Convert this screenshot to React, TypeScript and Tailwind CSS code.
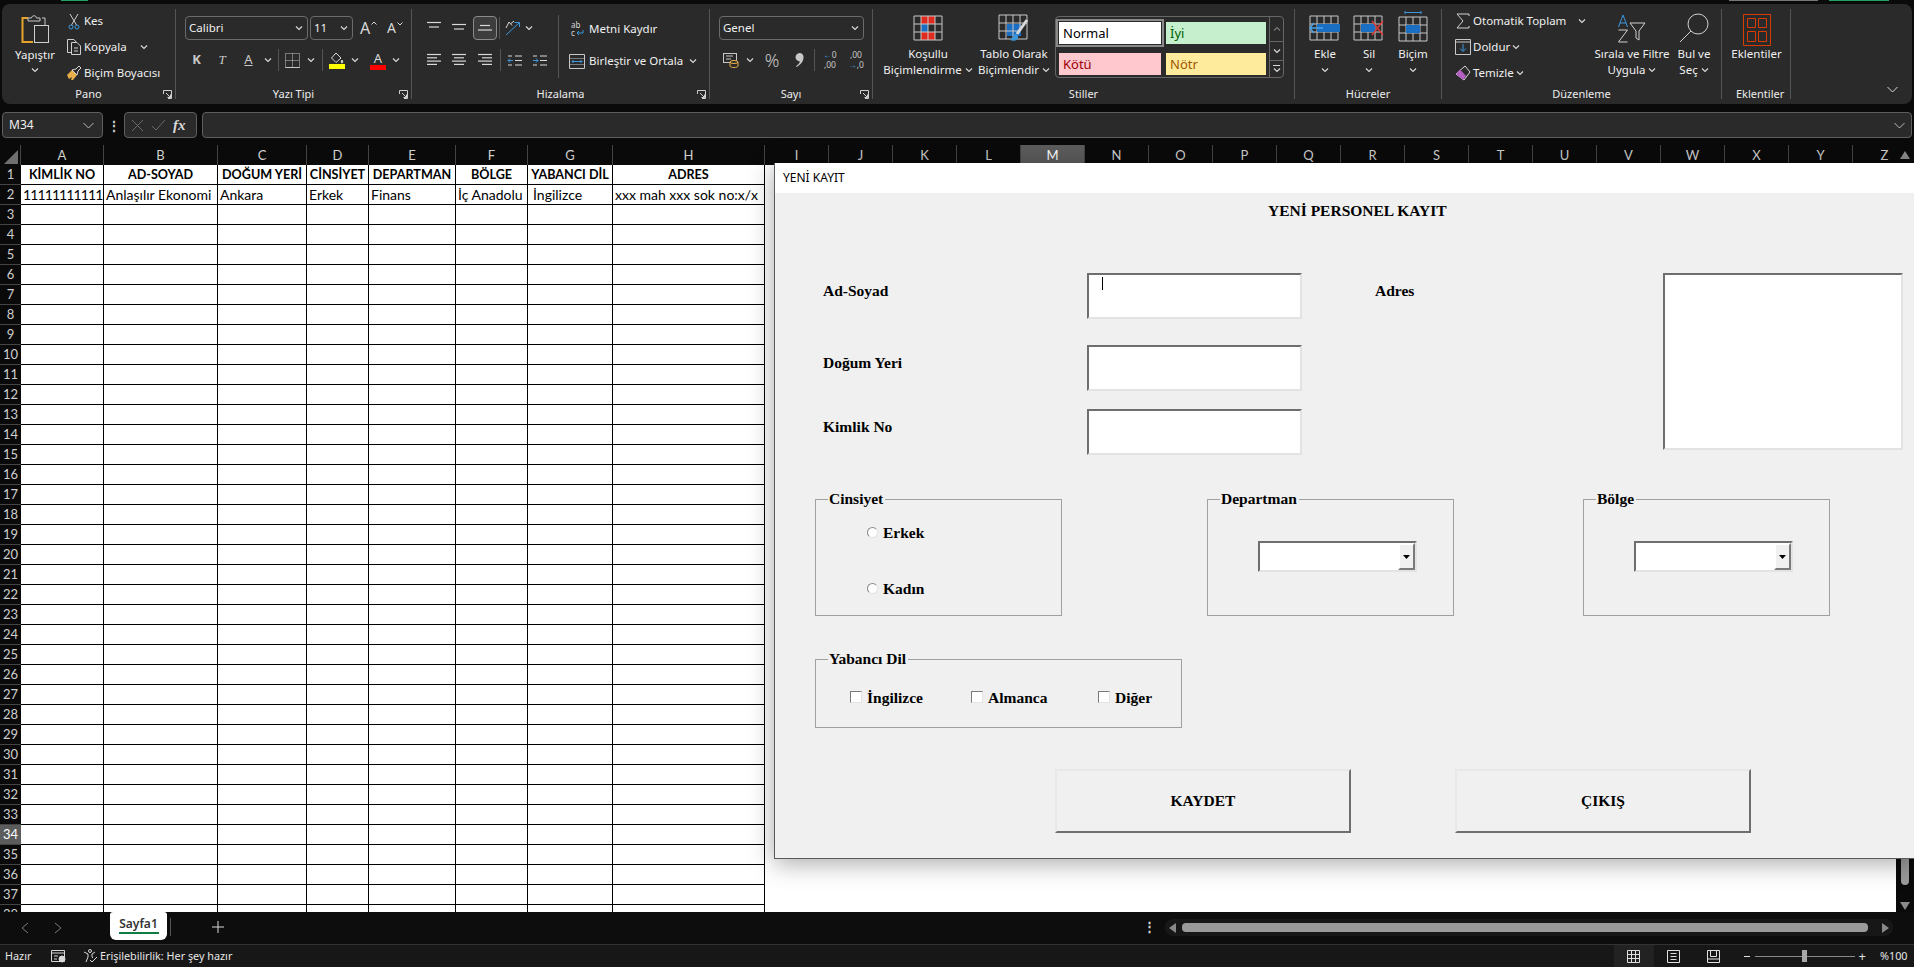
import React from 'react';

const UI = "font-['Noto_Sans','Open_Sans',sans-serif]";
const SERIF = "font-['Liberation_Serif','Times_New_Roman',serif] font-bold text-black text-[15.5px] leading-[18px]";

const Chev = ({ className = '' }: { className?: string }) => (
  <svg width="8" height="6" viewBox="0 0 8 6" className={`shrink-0 ${className}`} fill="none" stroke="#d8d8d8" strokeWidth="1.2">
    <path d="M1 1.5 4 4.5 7 1.5" />
  </svg>
);

const Launcher = () => (
  <svg width="9" height="9" viewBox="0 0 9 9" fill="none" stroke="#cfcfcf" strokeWidth="1">
    <path d="M.5 4V.5H8.5V8.5H5M3 3 7.5 7.5M7.5 4.5v3h-3" />
  </svg>
);

// Lines for the alignment buttons
const Lines = ({ rows, color = '#d8d8d8' }: { rows: [number, number][]; color?: string }) => (
  <svg width="16" height="14" viewBox="0 0 16 14" stroke={color} strokeWidth="1.2">
    {rows.map(([x, w], i) => (
      <path key={i} d={`M${x} ${1.5 + i * (rows.length > 3 ? 3.3 : 4.5)}h${w}`} />
    ))}
  </svg>
);

// Table glyph used by the big ribbon buttons
const CellGrid = ({ children, w = 30, h = 26 }: { children?: React.ReactNode; w?: number; h?: number }) => (
  <svg width={w} height={h} viewBox="0 0 30 26" fill="none">
    {children}
    <path d="M1 1h28v24H1zM1 9h28M1 17h28M8 1v24M15 1v24M22 1v24" stroke="#c8c8c8" strokeWidth="1" />
  </svg>
);

const Group = ({ className, label, launcher, children }: { className: string; label: string; launcher?: boolean; children: React.ReactNode }) => (
  <div className={`flex flex-col shrink-0 h-[90px] mt-[5px] border-r border-[#555] ${className}`}>
    <div className="flex-1 flex min-h-0">{children}</div>
    <div className="h-[10px] grid grid-cols-[14px_1fr_14px] items-center text-[11px] leading-[10px] text-[#ececec]">
      <span />
      <span className="text-center whitespace-nowrap">{label}</span>
      <span className="pl-[2px]">{launcher && <Launcher />}</span>
    </div>
  </div>
);

const Big = ({ className, icon, top, bottom, chev = true }: { className: string; icon: React.ReactNode; top: string; bottom?: string; chev?: boolean }) => (
  <div className={`flex flex-col items-center shrink-0 text-[11.5px] leading-[16px] text-[#f0f0f0] whitespace-nowrap ${className}`}>
    <div className="h-[37px] flex items-center justify-center">{icon}</div>
    <div>{top}</div>
    <div className="h-[16px] flex items-center gap-[3px]">
      {bottom}
      {chev && <Chev />}
    </div>
  </div>
);

const Small = ({ icon, text, chev, chevClass = '' }: { icon: React.ReactNode; text: string; chev?: boolean; chevClass?: string }) => (
  <div className="h-[18px] flex items-center text-[11.5px] text-[#f0f0f0] whitespace-nowrap">
    <span className="w-[20px] flex justify-center shrink-0">{icon}</span>
    <span>{text}</span>
    {chev && <Chev className={chevClass} />}
  </div>
);

const Sep = ({ className = 'h-[22px]' }: { className?: string }) => <span className={`w-px bg-[#555] shrink-0 ${className}`} />;

const Combo = ({ className, text }: { className: string; text: string }) => (
  <div className={`h-[24px] rounded-[4px] border border-[#6b6b6b] flex items-center justify-between pl-[3px] pr-[4px] text-[11.5px] text-[#f0f0f0] ${className}`}>
    <span>{text}</span>
    <Chev />
  </div>
);

const TopStrip = () => (
  <div className="h-px flex shrink-0">
    <span className="ml-[61px] w-[27px] bg-[#21a366]" />
    <span className="ml-[1641px] w-[89px] bg-[#777]" />
    <span className="ml-[11px] w-[60px] bg-[#21a366]" />
  </div>
);

const Ribbon = () => (
  <div className={`mx-[2px] mt-[3px] h-[100px] rounded-[8px] bg-[#2a2a2a] flex shrink-0 ${UI}`}>
    <Group className="w-[174px]" label="Pano" launcher>
      <div className="w-[62px] pl-[4px] flex flex-col items-center text-[11.5px] text-[#f0f0f0]">
        <svg width="28" height="30" viewBox="0 0 28 30" fill="none" className="mt-[4px]">
          <path d="M7 5H1.5v24H12" stroke="#e5a32a" strokeWidth="2" />
          <path d="M7 8V5h3.5c.3-3 4.700-3 5 0H19v3zM21 5h3v7" stroke="#c8c8c8" />
          <rect x="13.500" y="12.500" width="14" height="17" stroke="#d0d0d0" fill="#2a2a2a" />
        </svg>
        <div className="mt-[4px] leading-[16px]">Yapıştır</div>
        <Chev className="mt-[4px]" />
      </div>
      <div className="pt-[3px] flex flex-col gap-[8px]">
        <Small
          text="Kes"
          icon={
            <svg width="12" height="17" viewBox="0 0 12 17" fill="none" stroke="#cfcfcf">
              <path d="M2 1 8.500 12M10 1 3.500 12" />
              <circle cx="3" cy="14" r="2" stroke="#3d97dd" />
              <circle cx="9" cy="14" r="2" stroke="#3d97dd" />
            </svg>
          }
        />
        <Small
          text="Kopyala"
          chev
          chevClass="ml-[13px]"
          icon={
            <svg width="15" height="16" viewBox="0 0 15 16" fill="none" stroke="#d0d0d0">
              <path d="M4 13.500H.5V.5H7L9 3" />
              <path d="M4.500 3.500H10l3.500 3.500v8.500h-9zM7 9h4M7 12h4" />
            </svg>
          }
        />
        <Small
          text="Biçim Boyacısı"
          icon={
            <svg width="16" height="16" viewBox="0 0 16 16" fill="none">
              <path d="M1 10 6 5l5 5-4 5H5l1-3-3 2z" fill="#e9b04a" />
              <path d="m6 5 4-1 3-3 2 2-3 3-1 4z" stroke="#d8d8d8" />
            </svg>
          }
        />
      </div>
    </Group>

    <Group className="w-[236px]" label="Yazı Tipi" launcher>
      <div className="flex flex-col pl-[9px] pt-[7px]">
        <div className="flex items-center">
          <Combo className="w-[123px]" text="Calibri" />
          <Combo className="w-[43px] ml-[2px]" text="11" />
          <span className="ml-[7px] w-[24px] flex text-[16px] leading-[20px] text-[#d8d8d8]">
            A
            <svg width="6" height="4" viewBox="0 0 6 4" fill="none" stroke="#d8d8d8" className="mt-[3px] ml-px"><path d="M.5 3.500 3 1l2.500 2.500" /></svg>
          </span>
          <span className="ml-[3px] w-[20px] flex text-[14px] leading-[20px] text-[#d8d8d8]">
            A
            <svg width="6" height="4" viewBox="0 0 6 4" fill="none" stroke="#d8d8d8" className="mt-[4px] ml-px"><path d="M.5.5 3 3l2.500-2.500" /></svg>
          </span>
        </div>
        <div className="mt-[10px] h-[20px] flex items-center text-[#c8c8c8]">
          <span className="w-[25px] text-center text-[13px] font-bold -ml-px">K</span>
          <span className="w-[26px] text-center text-[13px] italic font-['Liberation_Serif',serif]">T</span>
          <span className="w-[27px] text-center text-[13px] underline">A</span>
          <span className="w-[12px] flex justify-center"><Chev /></span>
          <span className="w-[8px] flex justify-center"><Sep /></span>
          <span className="w-[21px] flex justify-center">
            <svg width="15" height="15" viewBox="0 0 15 15" fill="none" stroke="#c8c8c8" strokeDasharray="1 1">
              <path d="M.5.5h14v14H.5zM7.500.5v14M.5 7.500h14" />
              <path d="M.5 14.500h14" strokeDasharray="none" />
            </svg>
          </span>
          <span className="w-[16px] flex justify-center"><Chev /></span>
          <span className="w-[6px] flex justify-center"><Sep /></span>
          <span className="w-[24px] flex flex-col items-center">
            <svg width="14" height="12" viewBox="0 0 14 12" fill="none" stroke="#d8d8d8">
              <path d="M6 1 1.500 6 6 10.500 11 6z" />
              <path d="M12 8c1 1.500 1 3 0 3s-1-1.500 0-3z" fill="#e9b04a" />
            </svg>
            <span className="w-[16px] h-[5px] bg-[#ffff00]" />
          </span>
          <span className="w-[12px] flex justify-center"><Chev /></span>
          <span className="w-[5px]" />
          <span className="w-[24px] flex flex-col items-center text-[13px] leading-[14px] text-[#d8d8d8]">
            A<span className="w-[16px] h-[5px] bg-[#ff0000]" />
          </span>
          <span className="w-[12px] flex justify-center"><Chev /></span>
        </div>
      </div>
    </Group>

    <Group className="w-[298px]" label="Hizalama" launcher>
      <div className="w-[146px] pl-[9px] pt-[7px] flex flex-col shrink-0">
        <div className="h-[24px] flex items-center">
          <span className="w-[25px] flex justify-center"><Lines rows={[[1, 14], [3, 10]]} /></span>
          <span className="w-[26px] flex justify-center pt-[3px]"><Lines rows={[[1, 14], [3, 10]]} /></span>
          <span className="w-[24px] h-[24px] ml-px rounded-[4px] border border-[#8a8a8a] bg-[#3d3d3d] flex justify-center items-end pb-[1px]"><Lines rows={[[3, 10], [1, 14]]} /></span>
          <span className="w-[5px] flex justify-center"><Sep /></span>
          <span className="w-[22px] flex justify-center">
            <svg width="18" height="16" viewBox="0 0 18 16" fill="none" stroke="#d8d8d8">
              <path d="M2 8 5 2l3 3.500M7 3.500 10 1" />
              <path d="M2 15 15 3M10.500 2.500h5V7" stroke="#3d97dd" />
            </svg>
          </span>
          <Chev className="ml-[1px]" />
        </div>
        <div className="mt-[10px] h-[20px] flex items-center">
          <span className="w-[25px] flex justify-center"><Lines rows={[[1, 14], [1, 10], [1, 14], [1, 10]]} /></span>
          <span className="w-[26px] flex justify-center"><Lines rows={[[1, 14], [3, 10], [1, 14], [3, 10]]} /></span>
          <span className="w-[26px] flex justify-center"><Lines rows={[[1, 14], [5, 10], [1, 14], [5, 10]]} /></span>
          <span className="w-[5px] flex justify-center"><Sep /></span>
          <span className="w-[24px] flex justify-center">
            <svg width="16" height="13" viewBox="0 0 16 13" fill="none" stroke="#d8d8d8">
              <path d="M8 2h7M8 6.500h7M8 11h7M1 2h4M1 11h4" />
              <path d="M6 6.500H1M3 4.500l-2 2 2 2" stroke="#3d97dd" />
            </svg>
          </span>
          <span className="w-[26px] flex justify-center">
            <svg width="16" height="13" viewBox="0 0 16 13" fill="none" stroke="#d8d8d8">
              <path d="M8 2h7M8 6.500h7M8 11h7M1 2h4M1 11h4" />
              <path d="M1 6.500h5M4 4.500l2 2-2 2" stroke="#3d97dd" />
            </svg>
          </span>
        </div>
      </div>
      <Sep className="h-[63px] mt-[6px]" />
      <div className="pl-[10px] pt-[10px] flex flex-col gap-[12px]">
        <div className="h-[20px] flex items-center text-[11.5px] text-[#f0f0f0]">
          <span className="w-[20px] shrink-0 text-[8px] leading-[8px] text-[#d8d8d8] pl-[2px]">
            ab
            <span className="flex items-center">
              c
              <svg width="8" height="7" viewBox="0 0 8 7" fill="none" stroke="#3d97dd" className="ml-px"><path d="M7 0v3H1M3 1 1 3l2 2" /></svg>
            </span>
          </span>
          Metni Kaydır
        </div>
        <div className="h-[20px] flex items-center text-[11.5px] text-[#f0f0f0] whitespace-nowrap">
          <svg width="16" height="15" viewBox="0 0 16 15" fill="none" className="mr-[4px]">
            <path d="M.5.5h15v14H.5z" stroke="#c8c8c8" />
            <path d="M.5 5h15M.5 10h15" stroke="#c8c8c8" />
            <rect x="1" y="5" width="14" height="5" fill="#2a2a2a" />
            <path d="M3 7.500h10M4.500 6 3 7.500 4.500 9M11.500 6 13 7.500 11.500 9" stroke="#3d97dd" />
          </svg>
          Birleştir ve Ortala
          <Chev className="ml-[6px]" />
        </div>
      </div>
    </Group>

    <Group className="w-[163px]" label="Sayı" launcher>
      <div className="pl-[9px] pt-[7px] flex flex-col">
        <Combo className="w-[145px]" text="Genel" />
        <div className="mt-[10px] h-[20px] flex items-center text-[#c8c8c8]">
          <span className="w-[24px] flex justify-center">
            <svg width="16" height="16" viewBox="0 0 16 16" fill="none">
              <rect x=".5" y="1.500" width="13" height="9" stroke="#c8c8c8" />
              <path d="M3 4h7M3 7h5" stroke="#c8c8c8" />
              <ellipse cx="11" cy="10" rx="4" ry="1.500" fill="#2a2a2a" stroke="#e9b04a" />
              <path d="M7 10v4c0 2 8 2 8 0v-4" stroke="#e9b04a" />
            </svg>
          </span>
          <span className="w-[14px] flex justify-center"><Chev /></span>
          <span className="w-[30px] text-center text-[18px] leading-[20px] font-light">%</span>
          <span className="w-[24px] flex justify-center">
            <svg width="9" height="14" viewBox="0 0 9 14"><path d="M4.500 0a4 4 0 0 1 4 4.500C8.500 9 5 12 1.500 14l-.5-.7C3 11.500 4.500 10 5 8.400A4.200 4.200 0 1 1 4.500 0z" fill="#c8c8c8" /></svg>
          </span>
          <span className="w-[6px] flex justify-center"><Sep /></span>
          <span className="w-[26px] text-[8.5px] leading-[10px] text-center"><span className="text-[#3d97dd]">←</span>0<br />,00</span>
          <span className="w-[26px] text-[8.5px] leading-[10px] text-center">,00<br /><span className="text-[#3d97dd]">→</span>,0</span>
        </div>
      </div>
    </Group>

    <Group className="w-[422px]" label="Stiller">
      <div className="pl-[12px] flex">
        <Big
          className="w-[86px]"
          top="Koşullu"
          bottom="Biçimlendirme"
          icon={
            <CellGrid>
              <path d="M8 1h14v8H8zM8 17h14v8H8z" fill="#e02a20" />
              <path d="M8 9h7v8H8z" fill="#1b6fc2" />
            </CellGrid>
          }
        />
        <Big
          className="w-[86px]"
          top="Tablo Olarak"
          bottom="Biçimlendir"
          icon={
            <svg width="32" height="32" viewBox="0 0 32 32" fill="none" className="mt-[5px]">
              <path d="M9 10h14v12H9z" fill="#1b6fc2" />
              <path d="M1 1h28v24H1zM1 9h28M1 17h20M8 1v24M15 1v24M22 1v14" stroke="#c8c8c8" />
              <path d="M29 6 19 20" stroke="#d8d8d8" strokeWidth="3" />
              <path d="M18 20c-3 1-3 4-6 6 4 2 9 0 8-4z" fill="#3d97dd" />
            </svg>
          }
        />
        <div className="w-[229px] h-[62px] mt-[7px] -ml-[2px] rounded-[4px] border border-[#666] flex text-[13px] leading-[22px] shrink-0">
          <div className="flex-1 grid grid-cols-[102px_100px] gap-x-[5px] gap-y-[6px] pl-[3px] pt-[5px]">
            <div className="h-[22px] pl-[4px] bg-white text-black outline outline-2 outline-offset-[1px] outline-[#8a8a8a]">Normal</div>
            <div className="h-[22px] pl-[4px] bg-[#c6efce] text-[#006100]">İyi</div>
            <div className="h-[22px] pl-[4px] bg-[#ffc7ce] text-[#9c0006]">Kötü</div>
            <div className="h-[22px] pl-[4px] bg-[#ffeb9c] text-[#9c5700]">Nötr</div>
          </div>
          <div className="w-[14px] border-l border-[#666] flex flex-col">
            <div className="h-[24px] flex items-center justify-center">
              <svg width="8" height="6" viewBox="0 0 8 6" fill="none" stroke="#777" strokeWidth="1.2"><path d="M1 4.500 4 1.500 7 4.500" /></svg>
            </div>
            <div className="h-[20px] border-y border-[#666] flex items-center justify-center"><Chev /></div>
            <div className="flex-1 flex flex-col items-center justify-center gap-[1px]"><span className="w-[7px] h-px bg-[#d8d8d8]" /><Chev /></div>
          </div>
        </div>
      </div>
    </Group>

    <Group className="w-[147px]" label="Hücreler">
      <div className="pl-[8px] flex">
        <Big
          className="w-[44px]"
          top="Ekle"
          bottom=""
          icon={
            <svg width="32" height="26" viewBox="0 0 32 26" fill="none">
              <path d="M1 1h28v24H1zM1 9h28M1 17h28M8 1v24M15 1v24M22 1v24" stroke="#c8c8c8" />
              <path d="M8 9h23v8H8z" fill="#1b6fc2" />
              <path d="M14 13H1M5 8l-4 5 4 5" stroke="#4aa3e8" strokeWidth="1.500" />
            </svg>
          }
        />
        <Big
          className="w-[44px]"
          top="Sil"
          bottom=""
          icon={
            <svg width="32" height="26" viewBox="0 0 32 26" fill="none">
              <path d="M1 1h28v24H1zM8 1v24M15 1v24M22 1v24M1 9h28M1 17h28" stroke="#c8c8c8" />
              <path d="M8 9h14v8H8z" fill="#1b6fc2" />
              <path d="m19 6 11 14M30 6 19 20" stroke="#d83b3b" strokeWidth="1.500" />
            </svg>
          }
        />
        <Big
          className="w-[44px]"
          top="Biçim"
          bottom=""
          icon={
            <svg width="30" height="32" viewBox="0 0 30 32" fill="none" className="-mt-[2px]">
              <path d="M7 1.500h16M7 0v3M23 0v3" stroke="#3d97dd" />
              <path d="M1 6h28v24H1zM1 14h28M1 22h28M8 6v24M15 6v24M22 6v24" stroke="#c8c8c8" />
              <path d="M8 14h14v8H8z" fill="#1b6fc2" />
            </svg>
          }
        />
      </div>
    </Group>

    <Group className="w-[280px]" label="Düzenleme">
      <div className="w-[145px] pl-[11px] pt-[3px] flex flex-col gap-[8px] shrink-0">
        <Small
          text="Otomatik Toplam"
          chev
          chevClass="ml-[12px]"
          icon={<svg width="14" height="16" viewBox="0 0 14 16" fill="none" stroke="#d0d0d0"><path d="M13 3V1H1l6 7-6 7h12v-2" /></svg>}
        />
        <Small
          text="Doldur"
          chev
          chevClass="ml-[2px]"
          icon={
            <svg width="16" height="16" viewBox="0 0 16 16" fill="none">
              <path d="M.5.5h15v15H.5zM.5 3h15" stroke="#c8c8c8" />
              <path d="M8 5v7M5 9.500 8 12.500 11 9.500" stroke="#3d97dd" />
            </svg>
          }
        />
        <Small
          text="Temizle"
          chev
          chevClass="ml-[2px]"
          icon={
            <svg width="16" height="16" viewBox="0 0 16 16">
              <path d="M10 1 15 7 9 15 1 9z" fill="none" stroke="#d8d8d8" />
              <path d="M5 4.500 11 11 8 15 1 9z" fill="#b45fc4" />
            </svg>
          }
        />
      </div>
      <Big
        className="w-[90px]"
        top="Sırala ve Filtre"
        bottom="Uygula"
        icon={
          <svg width="30" height="30" viewBox="0 0 30 30" fill="none" className="mt-[2px]">
            <path d="M1.500 13 6 1l4.500 12M3 9h6" stroke="#3d97dd" />
            <path d="M1.500 16h9l-9 12h9" stroke="#d0d0d0" />
            <path d="M13 9h15l-6 8v9l-3-2v-7z" stroke="#d0d0d0" />
          </svg>
        }
      />
      <Big
        className="w-[34px]"
        top="Bul ve"
        bottom="Seç"
        icon={
          <svg width="30" height="30" viewBox="0 0 30 30" fill="none" stroke="#d0d0d0" className="mt-[1px]">
            <circle cx="19" cy="11" r="10" />
            <path d="M12 18 1 29" />
          </svg>
        }
      />
    </Group>

    <Group className="w-[69px]" label="Eklentiler">
      <Big
        className="w-[69px]"
        top="Eklentiler"
        chev={false}
        icon={
          <svg width="28" height="32" viewBox="0 0 28 32" fill="none" stroke="#d83b01" className="mt-[5px]">
            <path d="M.5.5h27v31H.5zM4.500 4.500h8v9h-8zM15.500 4.500h8v9h-8zM4.500 17.500h8v10h-8zM15.500 17.500h8v10h-8z" />
          </svg>
        }
      />
    </Group>

    <div className="flex-1 flex justify-end items-end pr-[14px] pb-[11px]">
      <svg width="11" height="7" viewBox="0 0 11 7" fill="none" stroke="#d8d8d8"><path d="M.5 1 5.500 6 10.500 1" /></svg>
    </div>
  </div>
);

const FormulaBar = () => (
  <div className={`mt-[8px] mx-[2px] h-[26px] flex items-stretch shrink-0 ${UI}`}>
    <div className="w-[101px] rounded-[4px] border border-[#5e5e5e] bg-[#2a2a2a] flex items-center justify-between pl-[6px] pr-[8px] text-[12px] text-[#f0f0f0]">
      M34
      <svg width="11" height="7" viewBox="0 0 11 7" fill="none" stroke="#b8b8b8"><path d="M.5 1 5.500 6 10.500 1" /></svg>
    </div>
    <div className="w-[21px] flex items-center justify-center text-[#c8c8c8] text-[14px] font-bold">⋮</div>
    <div className="w-[73px] rounded-[4px] border border-[#5e5e5e] bg-[#2a2a2a] flex items-center pl-[6px] gap-[7px]">
      <svg width="13" height="13" viewBox="0 0 13 13" stroke="#6a6a6a"><path d="m1 1 11 11M12 1 1 12" /></svg>
      <svg width="15" height="12" viewBox="0 0 15 12" fill="none" stroke="#6a6a6a"><path d="m1 7 4 4 9-10" /></svg>
      <span className="font-['Liberation_Serif',serif] italic font-bold text-[15px] text-[#d8d8d8] leading-none">fx</span>
    </div>
    <div className="ml-[5px] flex-1 rounded-[4px] border border-[#5e5e5e] bg-[#2a2a2a] flex items-center justify-end pr-[6px]">
      <svg width="11" height="7" viewBox="0 0 11 7" fill="none" stroke="#b8b8b8"><path d="M.5 1 5.500 6 10.500 1" /></svg>
    </div>
  </div>
);

const COLS: [string, string][] = [
  ['A', 'w-[83px]'], ['B', 'w-[114px]'], ['C', 'w-[89px]'], ['D', 'w-[62px]'], ['E', 'w-[87px]'], ['F', 'w-[72px]'], ['G', 'w-[85px]'], ['H', 'w-[152px]'],
];
const EXTRA = 'IJKLMNOPQRSTUVWXYZ'.split('');
const HEAD = ['KİMLİK NO', 'AD-SOYAD', 'DOĞUM YERİ', 'CİNSİYET', 'DEPARTMAN', 'BÖLGE', 'YABANCI DİL', 'ADRES'];
const ROW2 = ['11111111111', 'Anlaşılır Ekonomi', 'Ankara', 'Erkek', 'Finans', 'İç Anadolu', 'İngilizce', 'xxx mah xxx sok no:x/x'];
const ROWS = Array.from({ length: 38 }, (_, i) => i + 1);
const CELL_FONT = "font-['Lato','Noto_Sans',sans-serif] text-[14px]";

const cellClass = (n: number, i: number) => {
  if (n === 1) return 'font-bold text-center text-[12.6px]';
  if (n === 2 && i === 0) return 'pl-[2px] tracking-[-0.9px]';
  if (n === 2 && i === 6) return 'pl-[5px]';
  return 'pl-[2px]';
};

const Sheet = () => (
  <div className={`flex-1 min-h-0 mt-[7px] flex flex-col overflow-hidden ${CELL_FONT}`}>
    {/* column letters */}
    <div className="h-[20px] flex shrink-0 text-[13px] text-[#cfcfcf] leading-[20px]">
      <div className="flex-1 min-w-0 flex overflow-hidden">
        <div className="w-[21px] shrink-0 flex items-end justify-end pr-[2px] pb-[1px] border-r border-[#444]">
          <svg width="14" height="14" viewBox="0 0 14 14"><path d="M14 0v14H0z" fill="#6f6f6f" /></svg>
        </div>
        {COLS.map(([c, w]) => (
          <div key={c} className={`${w} text-center border-r border-[#444] shrink-0`}>{c}</div>
        ))}
        {EXTRA.map(c => (
          <div key={c} className={`w-[64px] text-center border-r border-[#444] shrink-0 ${c === 'M' ? 'bg-[#5c5c5c] text-white' : ''}`}>{c}</div>
        ))}
      </div>
      <div className="w-[18px] shrink-0 flex items-center justify-center">
        <svg width="10" height="8" viewBox="0 0 10 8"><path d="M0 8h10L5 0z" fill="#8a8a8a" /></svg>
      </div>
    </div>
    <div className="flex-1 min-h-0 flex overflow-hidden">
      <div className="flex-1 min-w-0 overflow-hidden bg-white">
        {ROWS.map(n => (
          <div key={n} className="h-[20px] flex">
            <div className={`w-[21px] shrink-0 text-center leading-[19px] text-[13px] border-b border-[#444] ${n === 34 ? 'bg-[#5c5c5c] text-white' : 'bg-[#0a0a0a] text-[#cfcfcf]'}`}>{n}</div>
            {COLS.map(([c, w], i) => (
              <div
                key={c}
                className={`${w} shrink-0 border-r border-b border-black text-black whitespace-nowrap overflow-hidden leading-[20px] ${cellClass(n, i)}`}
              >
                {n === 1 ? HEAD[i] : n === 2 ? ROW2[i] : ''}
              </div>
            ))}
          </div>
        ))}
      </div>
      <div className="w-[18px] shrink-0 bg-[#0a0a0a] flex flex-col items-center justify-end pb-[2px]">
        <div className="w-[8px] h-[28px] rounded-b-[4px] bg-[#9a9a9a]" />
        <svg width="10" height="8" viewBox="0 0 10 8" className="mt-[17px]"><path d="M0 0h10L5 8z" fill="#8a8a8a" /></svg>
      </div>
    </div>
  </div>
);

const TextBox = ({ className, caret }: { className: string; caret?: boolean }) => (
  <div className={`bg-white border-2 border-t-[#6e6e6e] border-l-[#6e6e6e] border-r-[#e3e3e3] border-b-[#e3e3e3] shrink-0 ${className}`}>
    {caret && <div className="w-px h-[13px] bg-black ml-[13px] mt-[2px]" />}
  </div>
);

const FormCombo = () => (
  <div className="ml-[50px] w-[159px] h-[31px] bg-white border-2 border-t-[#6e6e6e] border-l-[#6e6e6e] border-r-[#e3e3e3] border-b-[#e3e3e3] flex justify-end">
    <div className="w-[17px] bg-[#f0f0f0] border-2 border-[#7a7a7a] border-t-white border-l-white flex items-center justify-center">
      <svg width="7" height="4" viewBox="0 0 7 4"><path d="M0 0h7L3.500 4z" fill="#000" /></svg>
    </div>
  </div>
);

const Field = ({ label, className, children }: { label: string; className: string; children?: React.ReactNode }) => (
  <fieldset className={`border border-[#a0a0a0] shrink-0 ${className}`}>
    <legend className={`ml-[12px] px-[1px] pr-[2px] ${SERIF}`}>{label}</legend>
    {children}
  </fieldset>
);

const Radio = ({ label, className }: { label: string; className: string }) => (
  <div className={`flex items-center ${SERIF} ${className}`}>
    <span className="w-[11px] h-[11px] -mt-[2px] rounded-full bg-white border border-[#8a8a8a] border-r-[#e3e3e3] border-b-[#e3e3e3] mr-[5px]" />
    {label}
  </div>
);

const Check = ({ label, className }: { label: string; className: string }) => (
  <div className={`flex items-center shrink-0 ${SERIF} ${className}`}>
    <span className="w-[12px] h-[12px] bg-white border border-t-[#7a7a7a] border-l-[#7a7a7a] border-r-[#e3e3e3] border-b-[#e3e3e3] mr-[5px] -mt-[3px]" />
    {label}
  </div>
);

const VbButton = ({ label, className }: { label: string; className: string }) => (
  <div className={`w-[296px] h-[64px] bg-[#f0f0f0] border-2 border-t-[#e8e8e8] border-l-[#e8e8e8] border-r-[#6e6e6e] border-b-[#6e6e6e] flex items-center justify-center ${SERIF} ${className}`}>
    {label}
  </div>
);

const Dialog = () => (
  <div className="absolute left-[774px] top-[163px] right-0 h-[696px] bg-[#f0f0f0] border-l border-b border-[#5a5a5a] shadow-[0_4px_24px_rgba(0,0,0,0.35)] flex flex-col">
    <div className={`h-[30px] bg-white flex items-center pl-[8px] text-[12px] text-black shrink-0 ${UI}`}>YENİ KAYIT</div>

    <div className={`h-[79px] pt-[9px] pl-[493px] ${SERIF} shrink-0`}>YENİ PERSONEL KAYIT</div>

    <div className="h-[178px] flex shrink-0">
      <div className="pl-[48px] w-[527px] shrink-0">
        <div className={`flex mt-[1px] ${SERIF}`}>
          <span className="w-[264px] mt-[9px]">Ad-Soyad</span>
          <TextBox className="w-[215px] h-[46px]" caret />
        </div>
        <div className={`flex mt-[26px] ${SERIF}`}>
          <span className="w-[264px] mt-[9px]">Doğum Yeri</span>
          <TextBox className="w-[215px] h-[46px]" />
        </div>
        <div className={`flex mt-[18px] ${SERIF}`}>
          <span className="w-[264px] mt-[9px]">Kimlik No</span>
          <TextBox className="w-[215px] h-[46px]" />
        </div>
      </div>
      <span className={`w-[288px] ml-[73px] mt-[10px] shrink-0 ${SERIF}`}>Adres</span>
      <TextBox className="w-[240px] h-[177px] mt-[1px]" />
    </div>

    <div className="mt-[40px] pl-[40px] flex shrink-0">
      <Field label="Cinsiyet" className="w-[247px] h-[126px]">
        <Radio label="Erkek" className="ml-[51px] mt-[16px]" />
        <Radio label="Kadın" className="ml-[51px] mt-[38px]" />
      </Field>
      <Field label="Departman" className="w-[247px] h-[126px] ml-[145px]">
        <div className="pt-[33px]"><FormCombo /></div>
      </Field>
      <Field label="Bölge" className="w-[247px] h-[126px] ml-[129px]">
        <div className="pt-[33px]"><FormCombo /></div>
      </Field>
    </div>

    <div className="mt-[34px] pl-[40px] shrink-0">
      <Field label="Yabancı Dil" className="w-[367px] h-[78px]">
        <div className="flex pt-[21px] pl-[34px]">
          <Check label="İngilizce" className="w-[121px]" />
          <Check label="Almanca" className="w-[127px]" />
          <Check label="Diğer" className="w-[80px]" />
        </div>
      </Field>
    </div>

    <div className="mt-[41px] pl-[280px] flex shrink-0">
      <VbButton label="KAYDET" className="" />
      <VbButton label="ÇIKIŞ" className="ml-[104px]" />
    </div>
  </div>
);

const TabBar = () => (
  <div className={`h-[32px] bg-[#0d0d0d] flex shrink-0 ${UI}`}>
    <div className="w-[110px] flex items-center pl-[21px] gap-[25px]">
      <svg width="8" height="12" viewBox="0 0 8 12" fill="none" stroke="#7a7a7a"><path d="M7 1 1 6l6 5" /></svg>
      <svg width="8" height="12" viewBox="0 0 8 12" fill="none" stroke="#7a7a7a"><path d="m1 1 6 5-6 5" /></svg>
    </div>
    <div className="w-[57px] h-[28px] bg-white rounded-b-[6px] rounded-t-[3px] flex flex-col items-center pt-[3px] text-[12px] font-semibold text-[#333] leading-[17px]">
      Sayfa1
      <span className="w-[40px] h-[2px] bg-[#107c41]" />
    </div>
    <span className="w-px h-[18px] bg-[#555] ml-[3px] mt-[6px]" />
    <svg width="12" height="12" viewBox="0 0 12 12" stroke="#d8d8d8" className="ml-[41px] mt-[9px]"><path d="M6 0v12M0 6h12" /></svg>
    <div className="ml-[919px] w-[6px] text-[#d8d8d8] text-[13px] font-bold mt-[5px]">⋮</div>
    <div className="ml-[16px] w-[728px] h-[17px] mt-[7px] rounded-[8px] bg-[#171717] flex items-center pl-[4px] gap-[6px]">
      <svg width="7" height="10" viewBox="0 0 7 10"><path d="M7 0v10L0 5z" fill="#8a8a8a" /></svg>
      <div className="w-[686px] h-[9px] rounded-[4px] bg-[#9a9a9a]" />
      <svg width="7" height="10" viewBox="0 0 7 10" className="ml-[8px]"><path d="M0 0v10l7-5z" fill="#8a8a8a" /></svg>
    </div>
  </div>
);

const StatusBar = () => (
  <div className={`h-[23px] bg-[#171717] border-t border-[#333] flex items-center text-[10.8px] text-[#e6e6e6] shrink-0 ${UI}`}>
    <span className="ml-[5px] w-[46px]">Hazır</span>
    <svg width="15" height="13" viewBox="0 0 15 13" fill="none" stroke="#d8d8d8">
      <path d="M.5.5h13v11H.5zM.5 3h13M3 6h4M3 9h3" />
      <circle cx="11" cy="9" r="3" fill="#d8d8d8" />
    </svg>
    <svg width="15" height="14" viewBox="0 0 15 14" fill="none" stroke="#d8d8d8" className="ml-[17px] mr-[2px]">
      <circle cx="7" cy="2" r="1.500" />
      <path d="M1 3l4 2v3l-2 5M12 3 9 5v3l1 1M7 11l2 2 5-5" />
    </svg>
    Erişilebilirlik: Her şey hazır
    <div className="ml-auto h-full w-[40px] bg-[#222] flex items-center justify-center">
      <svg width="13" height="13" viewBox="0 0 13 13" fill="none" stroke="#e0e0e0"><path d="M.5.5h12v12H.5zM.5 4.500h12M.5 8.500h12M4.500.5v12M8.500.5v12" /></svg>
    </div>
    <div className="w-[40px] flex justify-center">
      <svg width="13" height="13" viewBox="0 0 13 13" fill="none" stroke="#e0e0e0"><path d="M.5.5h12v12H.5zM3.500 3.500h6M3.500 6.500h6M3.500 9.500h6" /></svg>
    </div>
    <div className="w-[40px] flex justify-center">
      <svg width="13" height="13" viewBox="0 0 13 13" fill="none" stroke="#e0e0e0"><path d="M.5.5h12v12H.5zM3.500.5v6h6v-6M.5 9h12" /></svg>
    </div>
    <span className="ml-[10px] w-[6px] h-px bg-[#e0e0e0]" />
    <div className="ml-[5px] w-[100px] h-px bg-[#8a8a8a] flex justify-center items-center">
      <span className="w-[5px] h-[12px] bg-[#a8a8a8]" />
    </div>
    <span className="ml-[4px] text-[13px] leading-none text-[#e0e0e0]">+</span>
    <span className="ml-[14px] mr-[6px] w-[28px]">%100</span>
  </div>
);

export default function App() {
  return (
    <div className="relative w-[1914px] h-[967px] overflow-hidden bg-[#0a0a0a] flex flex-col">
      <TopStrip />
      <Ribbon />
      <FormulaBar />
      <Sheet />
      <TabBar />
      <StatusBar />
      <Dialog />
    </div>
  );
}
